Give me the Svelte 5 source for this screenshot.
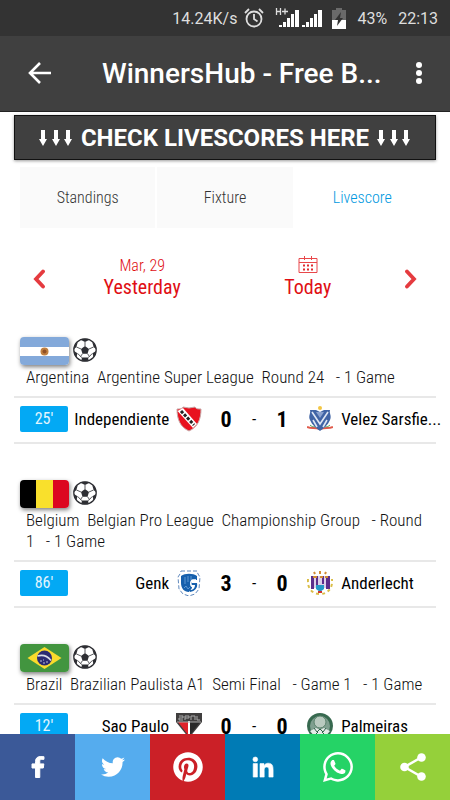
<script>
  const tabs = ['Standings', 'Fixture', 'Livescore'];
  let activeTab = $state('Livescore');

  const leagues = [
    {
      flag: 'argentina',
      title: 'Argentina\u00a0 Argentine Super League\u00a0 Round 24\u00a0\u00a0 -\u00a01 Game',
      match: { minute: "25'", home: 'Independiente', homeScore: 0, awayScore: 1, away: 'Velez Sarsfie...' }
    },
    {
      flag: 'belgium',
      title: 'Belgium\u00a0 Belgian Pro League\u00a0 Championship Group\u00a0\u00a0 -\u00a0Round 1\u00a0\u00a0 -\u00a01 Game',
      match: { minute: "86'", home: 'Genk', homeScore: 3, awayScore: 0, away: 'Anderlecht' }
    },
    {
      flag: 'brazil',
      title: 'Brazil\u00a0 Brazilian Paulista A1\u00a0 Semi Final\u00a0\u00a0 -\u00a0Game 1\u00a0\u00a0 -\u00a01 Game',
      match: { minute: "12'", home: 'Sao Paulo', homeScore: 0, awayScore: 0, away: 'Palmeiras' }
    }
  ];
</script>

{#snippet arrows()}
  <svg class="arrows" viewBox="0 0 34 18" aria-hidden="true">
    {#each [4, 17, 29] as x}
      <path d="M{x - 2} 1h4v9h2l-4 7-4-7h2z" fill="#fff" />
    {/each}
  </svg>
{/snippet}

{#snippet flag(name)}
  <svg class="flag" viewBox="0 0 49 28" aria-hidden="true">
    {#if name == 'argentina'}
      <rect width="49" height="28" fill="#83a9da" />
      <rect y="10" width="49" height="9" fill="#fff" />
      <circle cx="24.5" cy="14.5" r="4" fill="#c08040" />
      <circle cx="24.5" cy="14.5" r="2" fill="#8f4f25" />
    {:else if name == 'belgium'}
      <rect width="16" height="28" fill="#000" />
      <rect x="16" width="17" height="28" fill="#f9e02c" />
      <rect x="33" width="16" height="28" fill="#dc0720" />
    {:else}
      <rect width="49" height="28" fill="#42953f" />
      <path d="M24.5 3l17 11-17 11-17-11z" fill="#fadb2c" />
      <circle cx="24.5" cy="14" r="7.5" fill="#2b2a72" />
      <path d="M17.5 12c5-1.5 10 0 13.5 4.5" fill="none" stroke="#d8dbe8" stroke-width="1.5" />
      <path d="M20 17h2m1 2h2m1-1h2m-5-2h1" stroke="#b9bbd8" />
    {/if}
  </svg>
{/snippet}

{#snippet ball()}
  <svg class="ball" viewBox="0 0 24 24" aria-hidden="true">
    <circle cx="12" cy="12" r="11.2" fill="#fff" stroke="#2d2e33" stroke-width="1.3" />
    <path
      d="M12 8l4 3-1.5 4.700h-5L8 11zM8 2l4 2 4-2-1.500-1.200h-5zM.8 11l2.500-1.800L4.800 4 2 7zM23.200 11l-2.500-1.800L19.200 4 22 7zM3.500 19l1-3.800L1 13l1 4zM20.500 19l-1-3.800L23 13l-1 4zM8.300 22.500L9 19.500h6l.7 3-3.700.8z"
      fill="#2d2e33"
    />
    <path
      d="M12 8V4M16 11l4.500-2M14.500 15.700l2 2.800M9.500 15.700l-2 2.800M8 11L3.500 9M4.800 15.500l2.700 3L9 19.500M19.200 15.500l-2.700 3L15 19.500"
      fill="none"
      stroke="#2d2e33"
      stroke-width="0.8"
    />
  </svg>
{/snippet}

{#snippet crest(team)}
  <svg class="crest" viewBox="0 0 26 26" aria-hidden="true">
    {#if team == 'Independiente'}
      <path d="M1 3c3 0 5 0 6-2 2 0 4 1 6 1s4-1 6-1c1 2 3 2 6 2 0 10-3 18-12 22C4 21 1 13 1 3z" fill="#e8121f" stroke="#c9a9a9" />
      <path d="M1.500 5L7 2l14 16-4 4z" fill="#fff" />
      <path d="M5 5l13 14" stroke="#222" stroke-width="3" stroke-dasharray="3 1.5" />
    {:else if team == 'Velez Sarsfie...'}
      <path d="M0 21c4 2 8 0 13 2 5-2 9 0 13-2" fill="none" stroke="#e05a4a" stroke-width="2" />
      <path d="M3 19c3 3 6 1 10 2 4-1 7 1 10-2" fill="none" stroke="#55a765" />
      <path d="M3 4h6l4 2 4-2h6c-1 3 2 6 0 10-2 5-6 8-10 11-4-3-8-6-10-11-2-4 1-7 0-10z" fill="#4064a5" />
      <path d="M5 6l8 12 8-12M6 14l4 7m10-7l-4 7" fill="none" stroke="#dfe7f4" stroke-width="1.6" />
      <path d="M9 6l4 6 4-6z" fill="#8aa2cf" />
      <circle cx="13" cy="2" r="2" fill="#f3c643" />
    {:else if team == 'Genk'}
      <path d="M5 1h16l1 3 2 3-1 12-4 5-6 2-6-2-4-5L2 7l2-3z" fill="#fff" stroke="#5f88bd" stroke-dasharray="4 2" />
      <path d="M5 6c4-3 12-3 16 0v4h-5v8l-3 4c-5 0-8-4-8-9z" fill="#1660ad" />
      <path d="M21 13h-5v2h3c0 3-2 5-5 5v2c5-1 8-4 7-9z" fill="#1660ad" />
      <path d="M9 7v7m3-8v6m3-6v4M8 18l2-2 2 3 2-2" fill="none" stroke="#5f98d3" />
      <path d="M20 10h-3c-3 1-3 6 0 7" fill="none" stroke="#fff" stroke-width="1.5" />
    {:else if team == 'Anderlecht'}
      <path d="M4 6h18v12H4z" fill="#ddd0ea" />
      <path d="M4 6h3v13H4zM9 6h2v12H9zM15 6h2v8h-2zM19 6h4v13h-4z" fill="#5c2e8c" />
      <path d="M9 15h8v4l-4 3-4-3z" fill="#2499c8" />
      <path d="M7 2l1 2M13 1v3M19 2l-1 2M6 7h4m3 0h3m2 0h3" stroke="#d28b35" stroke-width="2" />
      <path d="M1 9c-1 9 4 15 12 15s13-6 12-15" fill="none" stroke="#dabd46" stroke-width="2" stroke-dasharray="3 3" />
      <path d="M11 22h4" stroke="#cf3030" stroke-width="2" />
    {:else if team == 'Sao Paulo'}
      <path d="M0 0h26v9L13 25 0 9z" fill="#403e3e" />
      <path d="M2 9h10v13z" fill="#e0222a" />
      <path d="M14 9h10L14 22z" fill="#292929" />
      <path d="M12 8h2v16h-2z" fill="#fff" />
      <path d="M1 9h24M3 3h4v2H3v2h4M9 7V3h4v2H9m6 2V3h4v4m2-4v4h3" fill="none" stroke="#aaa" />
    {:else}
      <circle cx="13" cy="13" r="13" fill="#37694f" />
      <circle cx="13" cy="13" r="10" fill="#7f9f8f" />
      <circle cx="13" cy="9" r="6" fill="#b9cabf" stroke="#5b826c" />
      <path d="M3 18l6-3 4 2 4-2 6 3-5 6H8z" fill="#e4ebe7" />
      <path d="M7 15l3 4 3-3 3 3 3-4M8 22l3-3m7 3l-3-3" fill="none" stroke="#2e6148" />
    {/if}
  </svg>
{/snippet}

<div class="page">
  <div class="status">
    <span>14.24K/s</span>
    <svg class="alarm" viewBox="0 0 20 20" aria-hidden="true">
      <g fill="none" stroke="#dedede" stroke-width="1.8">
        <circle cx="10" cy="11" r="7.5" />
        <path d="M10 6v5l3.5 2.5M1 5l4-4M19 5l-4-4" />
      </g>
    </svg>
    <svg class="signal" viewBox="0 0 48 20" aria-hidden="true">
      <path d="M4 17h3v2H4zM8 14h3v5H8zM12 10h3v9h-3zM16 6h3v13h-3zM20 2h4v17h-4z" fill="#fff" />
      <path d="M27 17h3v2h-3zM31 14h3v5h-3zM35 10h3v9h-3zM39 6h3v13h-3zM43 2h4v17h-4z" fill="#fff" />
      <path d="M1.500 0v7M1.500 3.500h4M5.500 0v7M7 3.500h6M10 .5v6" fill="none" stroke="#dedede" stroke-width="1.3" />
    </svg>
    <svg class="battery" viewBox="0 0 14 21" aria-hidden="true">
      <path d="M4 0h6v2h4v10H0V2h4z" fill="#6a6a6a" />
      <path d="M0 12h14v9H0z" fill="#fff" />
      <path d="M9 4l-6 8h3l-1 6 6-8H8z" fill="#333" />
    </svg>
    <span>43%</span>
    <span>22:13</span>
  </div>

  <header>
    <button class="icon-btn" aria-label="Back">
      <svg class="back" viewBox="0 0 24 24">
        <path d="M23 11H2M12 1L2 11l10 10" fill="none" stroke="#fff" stroke-width="2.6" />
      </svg>
    </button>
    <h1>WinnersHub - Free B...</h1>
    <button class="icon-btn menu" aria-label="Menu">
      <svg class="dots" viewBox="0 0 8 24">
        <circle cx="4" cy="3" r="3" fill="#fff" />
        <circle cx="4" cy="11" r="3" fill="#fff" />
        <circle cx="4" cy="19" r="3" fill="#fff" />
      </svg>
    </button>
  </header>

  <main>
    <a class="banner" href="#livescores">
      {@render arrows()}
      <span>CHECK LIVESCORES HERE</span>
      {@render arrows()}
    </a>

    <nav class="tabs">
      {#each tabs as tab}
        <button class:active={activeTab == tab} onclick={() => (activeTab = tab)}>{tab}</button>
      {/each}
    </nav>

    <div class="dates">
      <button class="chevron" aria-label="Previous day">
        <svg viewBox="0 0 12 20">
          <path d="M10 2.5L3 10l7 7.5" fill="none" stroke="#e53b3f" stroke-width="3.8" stroke-linecap="round" />
        </svg>
      </button>
      <button class="day">
        <small>Mar, 29</small>
        <span>Yesterday</span>
      </button>
      <button class="day">
        <svg class="calendar" viewBox="0 0 20 18" aria-hidden="true">
          <path d="M1 2.500h18v14H1zM1 6.500h18M6.500 0v4M13.500 0v4" fill="none" stroke="#e8474a" />
          <path d="M5 9.500h2m2 0h2m2 0h2M5 13.500h2m2 0h2m2 0h2" stroke="#e02b2f" stroke-width="2" />
        </svg>
        <span>Today</span>
      </button>
      <button class="chevron" aria-label="Next day">
        <svg viewBox="0 0 12 20">
          <path d="M2 2.5l7 7.5-7 7.5" fill="none" stroke="#e53b3f" stroke-width="3.8" stroke-linecap="round" />
        </svg>
      </button>
    </div>

    {#each leagues as league}
      <section>
        <div class="icons">
          {@render flag(league.flag)}
          {@render ball()}
        </div>
        <h2>{league.title}</h2>
        <div class="match">
          <span class="minute">{league.match.minute}</span>
          <span class="team home">{league.match.home}</span>
          {@render crest(league.match.home)}
          <b>{league.match.homeScore}</b>
          <span class="dash">-</span>
          <b>{league.match.awayScore}</b>
          {@render crest(league.match.away)}
          <span class="team">{league.match.away}</span>
        </div>
      </section>
    {/each}
  </main>

  <footer>
    <a class="facebook" href="#facebook" aria-label="Facebook">
      <svg viewBox="0 0 32 32">
        <path
          stroke="#fff"
          d="M17.780 26.500V17.008h3.522l.527-4.090h-4.050v-2.610c0-1.182.330-1.990 2.023-1.990h2.166V5.660c-.375-.050-1.660-.160-3.155-.160-3.123 0-5.260 1.405-5.260 4.905v2.516h-3.530v4.090h3.530V26.500h4.223z"
        />
      </svg>
    </a>
    <a class="twitter" href="#twitter" aria-label="Twitter">
      <svg viewBox="0 0 32 32">
        <path d="M28 8.557a9.913 9.913 0 0 1-2.828.775 4.930 4.930 0 0 0 2.166-2.725 9.738 9.738 0 0 1-3.130 1.194 4.920 4.920 0 0 0-3.593-1.550 4.924 4.924 0 0 0-4.794 6.049c-4.090-.210-7.720-2.170-10.150-5.150a4.942 4.942 0 0 0-.665 2.477c0 1.710.870 3.214 2.190 4.100a4.968 4.968 0 0 1-2.230-.616v.060c0 2.390 1.700 4.380 3.952 4.830-.414.115-.850.174-1.297.174-.318 0-.626-.030-.928-.086a4.935 4.935 0 0 0 4.600 3.420 9.893 9.893 0 0 1-6.114 2.107c-.398 0-.790-.023-1.175-.068a13.953 13.953 0 0 0 7.550 2.213c9.056 0 14.010-7.507 14.010-14.013 0-.213-.005-.426-.015-.637.960-.695 1.795-1.560 2.455-2.550z" />
      </svg>
    </a>
    <a class="pinterest" href="#pinterest" aria-label="Pinterest">
      <svg viewBox="-1 -1 26 26">
        <path d="M12 0C5.373 0 0 5.372 0 12c0 5.084 3.163 9.426 7.627 11.174-.105-.949-.2-2.405.042-3.441.218-.937 1.407-5.965 1.407-5.965s-.359-.719-.359-1.782c0-1.668.967-2.914 2.171-2.914 1.023 0 1.518.769 1.518 1.690 0 1.029-.655 2.568-.994 3.995-.283 1.194.599 2.169 1.777 2.169 2.133 0 3.772-2.249 3.772-5.495 0-2.873-2.064-4.882-5.012-4.882-3.414 0-5.418 2.561-5.418 5.207 0 1.031.397 2.138.893 2.738a.36.36 0 0 1 .083.345l-.333 1.360c-.053.220-.174.267-.402.161-1.499-.698-2.436-2.889-2.436-4.649 0-3.785 2.750-7.262 7.929-7.262 4.163 0 7.398 2.967 7.398 6.931 0 4.136-2.607 7.464-6.227 7.464-1.216 0-2.359-.631-2.750-1.378l-.748 2.853c-.271 1.043-1.002 2.350-1.492 3.146 1.124.347 2.317.535 3.554.535 6.627 0 12-5.373 12-12S18.627 0 12 0z" />
      </svg>
    </a>
    <a class="linkedin" href="#linkedin" aria-label="LinkedIn">
      <svg viewBox="0 0 32 32">
        <path
          stroke="#fff"
          stroke-width="0.6"
          d="M6.200 12.600h4.200v13.500H6.200zM8.300 6a2.400 2.400 0 1 1 0 4.800 2.400 2.400 0 0 1 0-4.800M13 12.600h4v1.800h.100c.600-1 1.900-2.200 4-2.200 4.200 0 5 2.800 5 6.500v7.400h-4.200v-6.600c0-1.500 0-3.500-2.200-3.500s-2.500 1.700-2.500 3.400v6.700H13z"
        />
      </svg>
    </a>
    <a class="whatsapp" href="#whatsapp" aria-label="WhatsApp">
      <svg viewBox="-16 16 480 480">
        <path d="M380.900 97.100C339 55.100 283.200 32 223.900 32c-122.400 0-222 99.600-222 222 0 39.100 10.200 77.300 29.600 111L0 480l117.700-30.900c32.400 17.700 68.900 27 106.100 27h.1c122.300 0 224.100-99.600 224.100-222 0-59.300-25.200-115-67.100-157zm-157 341.600c-33.200 0-65.700-8.900-94-25.700l-6.700-4-69.800 18.300L72 359.200l-4.400-7c-18.500-29.400-28.200-63.300-28.200-98.200 0-101.700 82.800-184.500 184.600-184.500 49.300 0 95.600 19.200 130.400 54.100 34.800 34.900 56.200 81.200 56.100 130.500 0 101.800-84.900 184.600-186.600 184.600zm101.200-138.200c-5.500-2.800-32.800-16.200-37.900-18-5.100-1.900-8.800-2.800-12.500 2.800-3.700 5.600-14.300 18-17.600 21.800-3.200 3.700-6.500 4.200-12 1.400-32.600-16.300-54-29.100-75.500-66-5.700-9.800 5.700-9.100 16.300-30.300 1.800-3.700.9-6.900-.5-9.700-1.400-2.800-12.500-30.100-17.100-41.200-4.500-10.800-9.100-9.300-12.500-9.500-3.200-.2-6.900-.2-10.600-.2-3.700 0-9.700 1.400-14.800 6.900-5.100 5.600-19.400 19-19.400 46.300 0 27.300 19.900 53.700 22.600 57.400 2.800 3.700 39.100 59.700 94.800 83.800 35.200 15.200 49 16.500 66.600 13.900 10.700-1.600 32.800-13.400 37.400-26.400 4.600-13 4.600-24.100 3.200-26.400-1.300-2.500-5-3.900-10.500-6.600z" />
      </svg>
    </a>
    <a class="share" href="#share" aria-label="Share">
      <svg viewBox="0 0 32 32">
        <path d="M24 6.5L7.5 16 24 25.5" fill="none" stroke="#fff" stroke-width="2.5" />
        <circle cx="24.5" cy="6.5" r="4.3" />
        <circle cx="7.5" cy="16" r="4.3" />
        <circle cx="24.5" cy="25.5" r="4.3" />
      </svg>
    </a>
  </footer>
</div>

<style>
  :global(body) {
    background: #fff;
  }

  .page {
    display: flex;
    flex-direction: column;
    height: 100vh;
    overflow: hidden;
    font-family: "Roboto Condensed", "Liberation Sans Narrow", Roboto, sans-serif;
    font-weight: 300;
  }

  svg {
    display: block;
    flex: none;
  }

  button {
    padding: 0;
    border: 0;
    background: none;
    font: inherit;
    color: inherit;
  }

  .status {
    display: flex;
    flex: none;
    align-items: center;
    justify-content: flex-end;
    gap: 11px;
    height: 36px;
    padding-right: 12px;
    background: #333;
    color: #dedede;
    font: 16px Roboto, sans-serif;
  }

  .alarm {
    width: 20px;
    height: 20px;
    margin-left: -4px;
  }

  .signal {
    width: 48px;
    height: 20px;
  }

  .battery {
    width: 14px;
    height: 21px;
    margin-left: -2px;
  }

  header {
    display: flex;
    flex: none;
    align-items: center;
    height: 75px;
    background: #404040;
    border-bottom: 1px solid #222;
    color: #fff;
  }

  .icon-btn {
    display: flex;
    justify-content: center;
    width: 80px;
  }

  .icon-btn.menu {
    width: 62px;
  }

  .back {
    width: 24px;
    height: 24px;
  }

  .dots {
    width: 8px;
    height: 24px;
  }

  h1 {
    flex: 1;
    margin: 0;
    padding-left: 22px;
    font: 500 28px Roboto, sans-serif;
    white-space: nowrap;
  }

  main {
    flex: 1;
    min-height: 0;
    padding: 3px 14px 0;
    overflow: hidden;
  }

  .banner {
    display: flex;
    align-items: center;
    justify-content: center;
    gap: 8px;
    height: 43px;
    border: 1px solid #111;
    background: #404040;
    box-shadow: 0 1px 3px rgba(0, 0, 0, 0.4);
    color: #fff;
    font: 700 24px Roboto, sans-serif;
    text-decoration: none;
    white-space: nowrap;
  }

  .arrows {
    width: 34px;
    height: 18px;
  }

  .tabs {
    display: grid;
    grid-template-columns: repeat(3, 1fr);
    gap: 2px;
    margin: 7px 6px 0;
  }

  .tabs button {
    height: 61px;
    background: #fafafa;
    color: #333;
    font-size: 16px;
  }

  .tabs button.active {
    background: #fff;
    color: #0098e0;
  }

  .dates {
    display: grid;
    grid-template-columns: 1fr 4fr 4fr 1fr;
    align-items: center;
    justify-items: center;
    height: 101px;
    padding: 0 4px;
    color: #e00f14;
  }

  .chevron svg {
    width: 14px;
    height: 20px;
  }

  .day {
    display: flex;
    flex-direction: column;
    align-items: center;
    padding-bottom: 4px;
    font-size: 20px;
    line-height: 22px;
  }

  .day small {
    font-size: 16px;
    line-height: 20px;
  }

  .day span {
    font-weight: 400;
  }

  .calendar {
    width: 20px;
    height: 18px;
    margin-bottom: 2px;
  }

  section {
    padding: 8px 0 28px;
  }

  .icons {
    display: flex;
    gap: 4px;
    height: 30px;
    padding-left: 6px;
  }

  .flag {
    width: 49px;
    height: 28px;
    border-radius: 4px;
    box-shadow: 1px 2px 4px rgba(0, 0, 0, 0.5);
  }

  .ball {
    width: 24px;
    height: 24px;
    margin-top: 1px;
  }

  h2 {
    margin: 0;
    padding: 0 10px 8px 12px;
    border-bottom: 2px solid #e8e8e8;
    color: #111;
    font-size: 17px;
    font-weight: 300;
    line-height: 21px;
  }

  .match {
    display: grid;
    grid-template-columns: 48px minmax(0, 16fr) 40px 34px 22px 34px 42px minmax(0, 15fr);
    align-items: center;
    justify-items: center;
    height: 42px;
    padding: 0 0 2px 6px;
    border-bottom: 2px solid #e8e8e8;
    color: #000;
    font-size: 17px;
    font-weight: 400;
  }

  .minute {
    width: 100%;
    border-radius: 2px;
    background: #03a9f4;
    color: #e2f5fe;
    font-size: 16px;
    line-height: 26px;
    text-align: center;
  }

  .team {
    justify-self: start;
    white-space: nowrap;
  }

  .team.home {
    justify-self: end;
  }

  .match b {
    font-size: 22px;
    font-weight: 700;
  }

  .crest {
    width: 26px;
    height: 26px;
  }

  footer {
    display: grid;
    flex: none;
    grid-template-columns: repeat(6, 1fr);
    height: 66px;
  }

  footer a {
    display: flex;
    align-items: center;
    justify-content: center;
  }

  footer svg {
    width: 32px;
    height: 32px;
    fill: #fff;
  }

  .facebook {
    background: #3b5998;
  }

  .twitter {
    background: #55acee;
  }

  .pinterest {
    background: #cb2027;
  }

  .linkedin {
    background: #007bb5;
  }

  .whatsapp {
    background: #25d366;
  }

  .share {
    background: #95d03a;
  }
</style>
